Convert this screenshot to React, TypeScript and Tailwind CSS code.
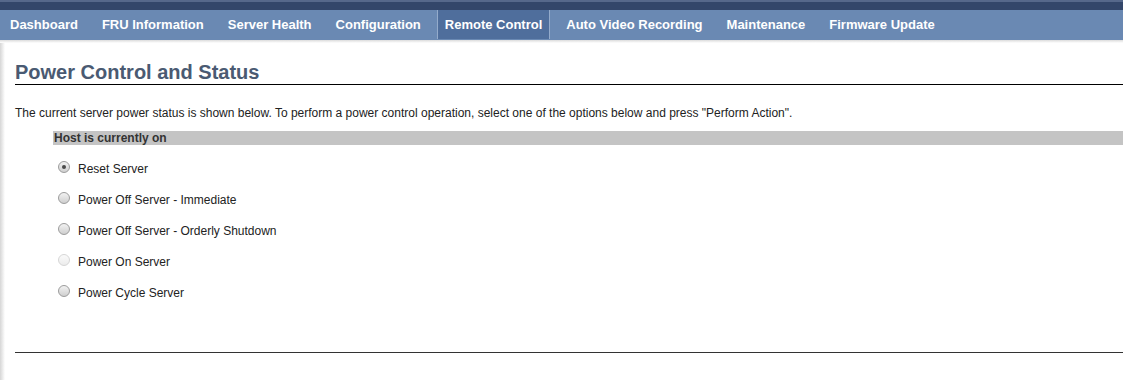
const navItems = [
  "Dashboard",
  "FRU Information",
  "Server Health",
  "Configuration",
  "Remote Control",
  "Auto Video Recording",
  "Maintenance",
  "Firmware Update",
];

const options = [
  { label: "Reset Server", checked: true },
  { label: "Power Off Server - Immediate" },
  { label: "Power Off Server - Orderly Shutdown" },
  { label: "Power On Server", disabled: true },
  { label: "Power Cycle Server" },
];

function Radio({ checked, disabled }: { checked?: boolean; disabled?: boolean }) {
  return (
    <span
      className={`-mt-[3px] flex h-[12px] w-[12px] items-center justify-center rounded-full border ${
        disabled
          ? "border-[#d6d6d6] bg-gradient-to-b from-[#fafafa] to-[#ececec]"
          : "border-[#9c9c9c] bg-gradient-to-b from-[#f2f2f2] to-[#cfcfcf]"
      }`}
    >
      {checked && <span className="h-[4px] w-[4px] rounded-full bg-[#4a4a4a]" />}
    </span>
  );
}

export default function App() {
  return (
    <div className="flex h-[380px] w-[1123px] flex-col overflow-hidden bg-white font-['Liberation_Sans',Arial,sans-serif] text-[#222]">
      {/* top bars */}
      <div className="h-[2px] bg-[#56688b]" />
      <div className="h-[8px] bg-[#33466a]" />
      <nav className="flex h-[30px] gap-[8px] bg-[#6a89b3] pl-[2px]">
        {navItems.map((item) => {
          const active = item === "Remote Control";
          return (
            <div
              key={item}
              className={`flex items-center text-[13px] font-bold whitespace-nowrap text-white ${
                active ? "mb-[1px] border-x border-[#94abcb] bg-[#4f6e9c] px-[7px]" : "px-[8px]"
              }`}
            >
              {item}
            </div>
          );
        })}
      </nav>
      <div className="h-[3px] bg-gradient-to-b from-[#dcdcdc] to-white" />

      <div className="flex flex-1">
        <div className="w-[5px] bg-gradient-to-r from-[#d6d6d6] to-white" />
        <main className="flex-1 pl-[10px]">
          <h1 className="mt-[17px] border-b border-black text-[20px] leading-[24px] font-bold text-[#4a5a72]">
            Power Control and Status
          </h1>
          <p className="mt-[21px] text-[12px] leading-[14px]">
            The current server power status is shown below. To perform a power control operation, select one of the
            options below and press "Perform Action".
          </p>
          <div className="mt-[11px] ml-[38px] h-[14px] bg-[#c4c4c4] pl-[1px] text-[12px] leading-[14px] font-bold text-[#333]">
            Host is currently on
          </div>
          <div className="mt-[8px] ml-[43px]">
            {options.map((o) => (
              <div key={o.label} className="flex h-[31px] items-center gap-[8px] text-[12px]">
                <Radio checked={o.checked} disabled={o.disabled} />
                <span>{o.label}</span>
              </div>
            ))}
          </div>
          <div className="mt-[44px] border-t border-[#333]" />
        </main>
      </div>
    </div>
  );
}
